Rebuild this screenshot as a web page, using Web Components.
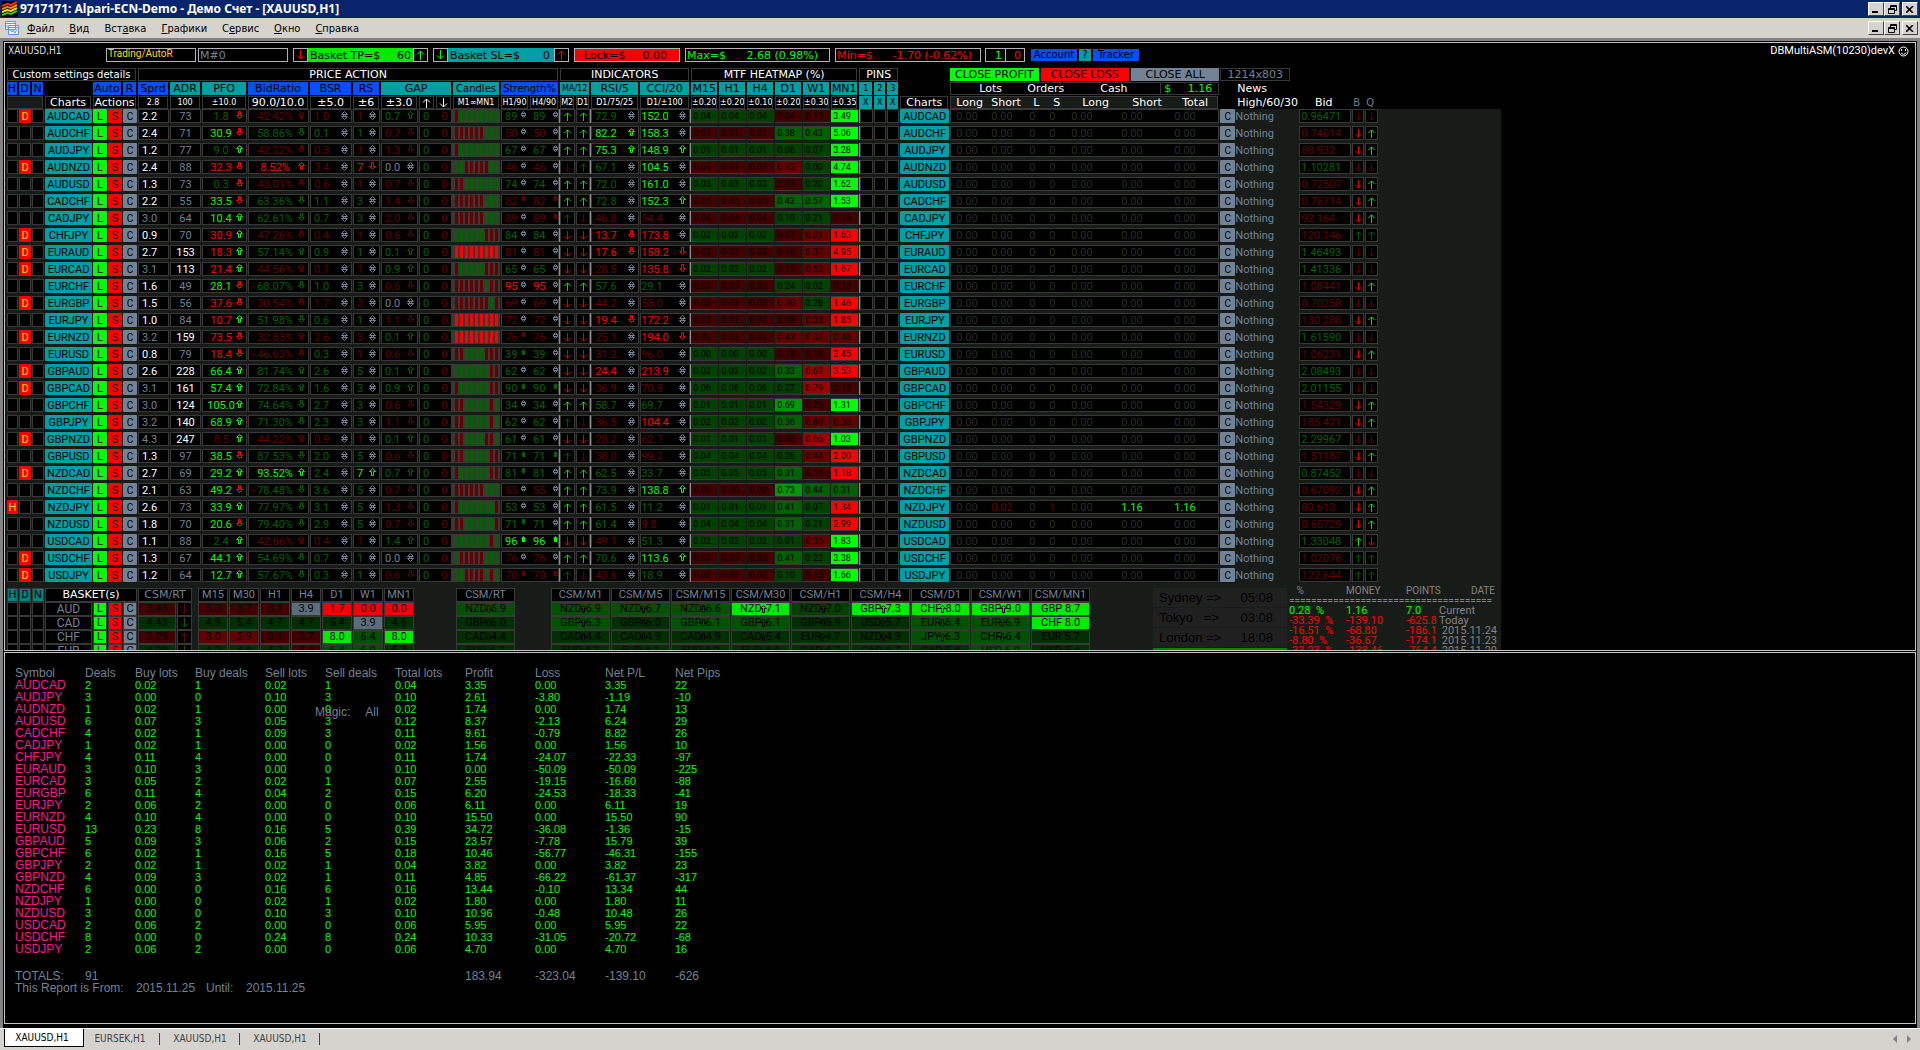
<!DOCTYPE html>
<html lang="ru">
<head>
<meta charset="utf-8">
<title>9717171: Alpari-ECN-Demo - Демо Счет - [XAUUSD,H1]</title>
<style>
html,body{margin:0;height:100%;background:#000;overflow:hidden}
body{font-family:Roboto,"Liberation Sans",sans-serif;font-size:11px;
--lime:#00ff00;--red:#ff0000;--dg:#006300;--dr:#630000;--slate:#738294;--teal:#009ea5;--blue:#0051f7;--line:#393839;--panel:#181c18;--face:#d6d3ce;
--wide:"DejaVu Sans",sans-serif;--ui:"DejaVu Sans Condensed","DejaVu Sans",sans-serif}
</style>
</head>
<body>
<trading-terminal></trading-terminal>
<script>
const RESET = `*{box-sizing:border-box}button,input{font:inherit;color:inherit;border:0;border-radius:0;padding:0;margin:0;background:none;min-width:0}svg{display:block;flex:none}`;
const COLORS = {G:'var(--lime)',R:'var(--red)',g:'var(--dg)',r:'var(--dr)',w:'#fff',s:'var(--slate)',k:'#000'};
const SHAPES = {
  hu:[7,8,'M3.5 .5L6.5 3.5H4.5V7.5H2.5V3.5H.5Z'],
  hd:[7,8,'M3.5 7.5L6.5 4.5H4.5V.5H2.5V4.5H.5Z'],
  n:[7,9,'M3.5 .5L6.5 3.5H.5ZM3.5 8.5L.5 5.5H6.5ZM2.5 3.5V5.5M4.5 3.5V5.5'],
  m:[5,7,'M2.5 .5L4.5 2.5V4.5L2.5 6.5L.5 4.5V2.5ZM1 2.5H4M1 4.5H4'],
  su:[5,7,'M2.5 0L5 3H4V6H1V3H0Z',1],
  sd:[5,7,'M2.5 6L5 3H4V0H1V3H0Z',1],
  u:[9,10,'M4.5 1V10M1 4.5L4.5 1L8 4.5'],
  d:[9,10,'M4.5 0V9M1 5.5L4.5 9L8 5.5']
};
function icon(name, color) {
  const s = SHAPES[name], c = COLORS[color];
  const paint = s[3] ? `fill="${c}"` : `fill="none" stroke="${c}"`;
  return `<svg width="${s[0]}" height="${s[1]}" viewBox="0 0 ${s[0]} ${s[1]}" ${paint} aria-hidden="true"><path d="${s[2]}"/></svg>`;
}
function define(name, render) {
  customElements.define(name, class extends HTMLElement {
    constructor() {
      super();
      const t = document.createElement('template');
      t.innerHTML = `<style>${RESET}</style>` + render();
      this.attachShadow({mode:'open'}).append(t.content.cloneNode(true));
    }
  });
}

define('title-bar', () => `<style>
:host{display:flex;align-items:center;height:18px;flex:none;background:#08246b;color:#fff;padding:0 2px;gap:2px;font:bold 12px "Noto Sans",sans-serif}
h1{flex:1;margin:0;font:inherit;line-height:18px;white-space:pre}
</style>
<svg width="16" height="16" viewBox="0 0 16 16" fill="none" stroke-width="2"><rect width="16" height="16" fill="#000"/><path stroke="#f73000" d="M0 5L5 3L9 4L15 1"/><path stroke="#ff8a00" d="M0 8L5 6L9 7L15 4"/><path stroke="#ffdb00" d="M0 11L5 9L9 10L15 7"/><path stroke="#42c300" d="M0 14L5 12L9 13L15 10"/></svg>
<h1>9717171: Alpari-ECN-Demo - Демо Счет - [XAUUSD,H1]</h1>
<window-buttons></window-buttons>`);

define('window-buttons', () => `<style>
:host{display:flex}
button{width:16px;height:14px;background:var(--face);border:1px solid;border-color:#fff #424142 #424142 #fff;display:flex;align-items:center;justify-content:center}
button:last-child{margin-left:2px}
</style>
<button aria-label="Minimize"><svg width="8" height="8" fill="none" stroke="#000" stroke-width="2"><path d="M0 7H6"/></svg></button>
<button aria-label="Restore"><svg width="9" height="9" fill="none" stroke="#000"><path d="M2.5 3V.5H8.5V5.5H6.5M2 1.5H9M.5 3.5H6.5V8.5H.5ZM0 4.5H7"/></svg></button>
<button aria-label="Close"><svg width="8" height="7" fill="none" stroke="#000" stroke-width="1.6"><path d="M0 0L7 7M7 0L0 7"/></svg></button>`);

define('menu-bar', () => `<style>
:host{display:flex;align-items:center;height:20px;flex:none;background:var(--face);color:#000;font:11px var(--ui);padding:0 2px 0 4px}
nav{display:flex;gap:15px;flex:1;margin-left:7px}
</style>
<svg width="16" height="16" viewBox="0 0 16 16" fill="#fff" stroke="#4a9af7"><path d="M1.5 1.5H11.5V9.5H1.5ZM4.5 5.5H14.5V14.5H4.5Z"/><path fill="none" d="M1 3.5H12M5 7.5H14M6 10L8 12L9 10L11 13L13 9M3 5V8"/></svg>
<nav><button><u>Ф</u>айл</button><button><u>В</u>ид</button><button>Вст<u>а</u>вка</button><button><u>Г</u>рафики</button><button>С<u>е</u>рвис</button><button><u>О</u>кно</button><button><u>С</u>правка</button></nav>
<window-buttons></window-buttons>`);

define('control-strip', () => `<style>
:host{display:flex;align-items:center;height:24px;padding:0 6px 0 3px;font:11px var(--wide);color:#000}
.name{width:98px;font:10px var(--ui);color:#dedbde;align-self:flex-start;margin-top:2px}
.f{height:14px;line-height:11px;border:1px solid #b5b2b5;display:flex;align-items:center;white-space:pre;overflow:hidden;padding:0 1px;text-align:left;flex:none}
.a{width:15px;justify-content:center;padding:0}
.f b{font-weight:400;margin-left:auto}
.blue,.q{height:12px;background:var(--blue);padding:0 2px;font-size:10px;line-height:12px;margin-right:2px;width:46px}
.q{background:var(--teal);width:12px}
.ver{margin:2px 0 0 auto;align-self:flex-start;font:11px/12px Roboto,sans-serif;color:#fff;display:flex;align-items:center;gap:3px}
</style>
<span class="name">XAUUSD,H1</span>
<button class="f" style="width:90px;color:#ffdb00;font:10px/10px Roboto;align-items:flex-start">Trading/AutoR</button>
<input class="f" aria-label="Magic number" value="M#0" style="width:90px;color:var(--slate);margin:0 5px 0 2px">
<button class="f a">${icon('d','R')}</button>
<span class="f" style="width:105px;background:#00eb00;border-color:#00eb00">Basket TP=$<b>60</b></span>
<button class="f a">${icon('u','G')}</button>
<button class="f a" style="margin-left:5px">${icon('d','G')}</button>
<span class="f" style="width:106px;background:var(--teal);border-color:var(--teal)">Basket SL=$<b style="margin-right:2px">0</b></span>
<button class="f a">${icon('u','R')}</button>
<button class="f" style="width:106px;background:#f70000;margin:0 5px;padding:0 12px 0 9px">Lock=$<b>0.00</b></button>
<span class="f" style="width:145px;color:var(--lime)">Max=$<b style="margin-right:10px">2.68 (0.98%)</b></span>
<span class="f" style="width:146px;color:var(--red);margin:0 4px 0 5px">Min=$<b style="margin-right:7px">-1.70 (-0.62%)</b></span>
<span class="f" style="width:20px;color:var(--lime);padding-right:3px;border-right:0"><b>1</b></span>
<span class="f" style="width:20px;color:var(--red);padding-right:3px;margin-right:6px"><b>0</b></span>
<button class="blue">Account</button><button class="q">?</button><button class="blue">Tracker</button>
<span class="ver">DBMultiASM(10230)devX<svg width="11" height="11" viewBox="0 0 11 11" fill="none" stroke="#fff"><circle cx="5.5" cy="5.5" r="4.5"/><path d="M3.5 3V5M7.5 3V5M3 7L5.5 8.5L8 7"/></svg></span>`);

const ROWS = `AUDCAD|D|2.2|73|1.8g d|42.42r u|1.0r|1r|0.7g u|rgggggggg|89g nn|UU|72.9g n|152.0G n|+.04 -.04 -.15 +3.49|0.96471g dd
AUDCHF||2.4|71|30.9G d|58.86g d|0.1g|1g|0.7r d|rrrrrrggg|50r nn|UU|82.2G u|158.3G n|-.01 +.38 +.43 +5.06|0.74014r DU
AUDJPY||1.2|77|9.0g u|42.22r d|0.3r|1r|1.3r d|rgggggggg|67g nn|UU|75.3G u|148.9G u|+.01 +.06 +.07 +3.28|88.932r DU
AUDNZD|D|2.4|88|32.3R d|8.52R u|3.4r|7R d|0.0s n|ggrrrrrgg|46r nn|du|67.1g n|104.5G n|-.01 -.32 +.00 +4.74|1.10281g dd
AUDUSD||1.3|73|0.3g d|43.01r d|0.6r|1r|0.7r d|rrggggggg|74g nn|UU|72.0g n|161.0G n|+.03 -.03 +.20 +1.62|0.72507r DU
CADCHF||2.2|55|33.5G d|63.36g d|1.1g|3g|1.4r d|rrrrrrggg|82r dd|UU|72.8g n|152.3G u|-.05 +.43 +.57 +1.53|0.76714r DU
CADJPY||3.0|64|10.4G u|62.61g d|0.7g|3g|2.0r d|rrrrrrggg|89r nu|ud|46.8r n|54.4r n|-.04 +.10 +.21 -.16|92.164r DU
CHFJPY|D|0.9|70|30.9R u|47.26r d|0.4r|1r|0.6r d|ggggggrrr|84g nn|DD|13.7R d|173.8R n|+.02 -.27 -.31 -1.63|120.146r uu
EURAUD|D|2.7|153|18.3R u|57.14g u|0.9g|1g|0.1g u|RRRRRRRRR|81r nn|DD|17.6R d|158.2R d|-.02 -.10 -.37 -4.95|1.46493g dd
EURCAD|D|3.1|113|21.4R u|44.56r u|0.1r|1r|0.9g u|rgggggrrr|65g nn|DD|28.5r n|135.8R d|+.02 -.17 -.52 -1.67|1.41336g dd
EURCHF||1.6|49|28.1G d|68.07g d|1.0g|3g|0.6r d|rrrrrrgrr|95R nn|UU|57.6g n|29.1g n|-.03 +.24 +.02 -.18|1.08441r DU
EURGBP|D|1.5|56|37.6R d|30.54r d|1.7r|3r|0.0s n|rrrrrrrgr|69r nn|DD|44.2r n|58.0r n|-.03 -.38 +.28 -1.46|0.70258r dd
EURJPY||1.0|84|10.7R u|51.98g d|0.6g|1g|1.1r d|RRRRRRRRR|72r nn|DD|19.4R d|172.2R n|-.02 -.08 -.33 -1.85|130.288r DU
EURNZD|D|3.2|159|73.5R d|32.83r u|2.6r|3r|0.1g u|RRRRRRRRR|76r dn|DD|25.1r n|194.0R d|-.03 -.43 -.37 -.46|1.61590g dd
EURUSD||0.8|79|18.4R d|46.63r d|0.3g|1r|0.6r d|rrggggrrr|39g un|DD|31.2r n|96.0r n|+.00 -.18 -.18 -3.45|1.06231r DU
GBPAUD|D|2.6|228|66.4G u|81.74g u|2.6g|5g|0.1g u|gggggggrr|62g nn|DD|24.4R n|213.9R n|+.02 +.33 -.62 -3.53|2.08493g dd
GBPCAD|D|3.1|161|57.4G u|72.84g u|1.6g|3g|0.9g u|rggggggrr|90g uu|DD|36.9r n|70.9r n|+.06 +.27 -.79 -.19|2.01155g dd
GBPCHF||3.0|124|105.0G u|74.64g d|2.7g|3g|0.6r d|rrgggggrg|34g nn|UU|58.7g n|69.7g n|+.01 +.69 -.22 +1.31|1.54329r DU
GBPJPY||3.2|140|68.9G u|71.30g d|2.3g|3g|1.1r d|rrgggggrg|62g nn|ud|36.5r n|104.4R n|+.02 +.36 -.60 -.38|185.421r DU
GBPNZD|D|4.3|247|8.5r u|44.22r u|0.9r|1r|0.1g u|rrggggrrg|61g nn|DD|28.2r n|62.7r n|+.01 -.02 -.66 +1.03|2.29967g dd
GBPUSD||1.3|97|38.5G d|87.53g d|2.0g|5g|0.6r d|rrgggggrr|71g uu|ud|38.0r n|99.2r n|+.04 +.26 -.44 -2.00|1.51187r DU
NZDCAD|D|2.7|69|29.2G u|93.52G u|2.4g|7G u|0.7g u|rggggggrr|81g dn|UU|62.5g n|33.7g n|+.05 +.31 -.15 -1.18|0.87452g dd
NZDCHF||2.1|63|49.2G d|78.48g d|3.6g|5g|0.7r d|rrrrrrggg|55r nn|UU|73.9g n|138.8G u|-.00 +.73 +.44 +.31|0.67092r DU
NZDJPY|H|2.6|73|33.9G u|77.97g d|3.1g|5g|1.3r d|rgggggggr|53g nn|UU|61.5g n|11.2g n|+.01 +.41 +.07 -1.34|80.613r DU
NZDUSD||1.8|70|20.6G d|79.40g d|2.9g|5g|0.7r d|rrggggggr|71g dn|UU|61.4g n|9.8r n|+.04 +.31 +.21 -2.99|0.65729r DU
USDCAD||1.1|88|2.4g u|42.66r u|0.4r|1r|1.4g u|gggggggrg|96G uu|DD|49.1r n|51.3g n|+.02 +.01 -.35 +1.83|1.33048g UD
USDCHF|D|1.3|67|44.1G u|54.69g d|0.7g|1g|0.0s n|grrrrrggg|76r nn|UU|70.6g n|113.6G u|-.03 +.41 +.22 +3.38|1.02076r uu
USDJPY|D|1.2|64|12.7G u|57.67g d|0.3g|1g|0.6r d|ggrrrrgrg|70r uu|ud|43.6r n|18.9g n|-.02 +.10 -.15 +1.66|122.644r uu`;
const COLS = [12,13,13,48,15,15,15,32,32,46,62,43,28,38,17,17,48,29,30,16,15,49,51,28,28,28,28,28,28,15,13,13,50,37,38,20,22,50,53,50,16,63,53,13,14,122];

const split = f => { const [a,i] = f.split(' '); return [a.slice(0,-1), a.slice(-1), i]; };
const box = (html, cls='', color='') => `<td class="${cls}"><div class="b"${color?` style="color:${COLORS[color]}"`:''}>${html}</div></td>`;
function reading(field, opt={}) {
  const [v,c,i='n'] = split(field);
  const ic = i==='n' ? icon('n','s') : icon('h'+i, opt.solid ? (i==='u'?'G':'R') : c);
  return box(`<span>${v}${opt.pct?'%':''}</span>${ic}`, 'v '+(opt.cls||''), c);
}
function thin(ch) { const l = ch.toLowerCase(); return icon(l, l==='u' ? (ch==='U'?'G':'g') : (ch==='D'?'R':'r')); }
function heat(s, cls) {
  const v = Math.abs(+s), up = s[0]==='+', lvl = v>=1?3:v>.6?2:v>=.3?1:0;
  const bg = (up?['#004100','#006100','#009a00','#00ff00']:['#420000','#630000','#9c0000','#ff0000'])[lvl];
  return `<td class="${cls}"><div class="b h" style="background:${bg}">${v.toFixed(2)}</div></td>`;
}
function row(line) {
  const f = line.split('|'), sym = f[0];
  const flag = k => f[1]===k ? `<div class="b flag">${k}</div>` : `<div class="b"></div>`;
  const [sv,sc,si] = split(f[10]);
  const str = k => box(`<span>${sv}</span>${icon({n:'m',u:'su',d:'sd'}[si[k]], si[k]==='n'?'s':sc)}`, k?'st2':'st1', sc);
  const ht = f[14].split(' '), hs = [ht[0],ht[0],...ht];
  const [bv,bc,ba] = split(f[15]);
  const jp = sym==='NZDJPY';
  const led = jp ? [['0.00'],['0.02','r'],['0'],['1','r'],['0.00'],['1.16','G'],['1.16','G']] : ['0.00','0.00','0','0','0.00','0.00','0.00'].map(x=>[x]);
  return `<tr><td>${flag('H')}</td><td>${flag('D')}</td><td>${flag('N')}</td>
<td><button class="sym">${sym}</button></td><td><button class="L">L</button></td><td><button class="S">S</button></td><td><button class="C">C</button></td>
${box(f[2],'p3',+f[2]<3?'w':'s')}${box(f[3],'c',+f[3]>=100?'w':'s')}${reading(f[4],{solid:1,cls:'c2'})}${reading(f[5],{pct:1,cls:'c2'})}${reading(f[6])}${reading(f[7])}${reading(f[8])}
<td colspan="2"><div class="b pair"><span style="color:var(--dg)">0</span><span style="color:var(--dr)">0</span></div></td>
<td><div class="candles">${[...f[9]].map(c=>`<i style="background:${COLORS[c]}"></i>`).join('')}</div></td>
${str(0)}${str(1)}${box(thin(f[11][0]),'c sep')}${box(thin(f[11][1]),'c')}${reading(f[12],{cls:'sep'})}${reading(f[13],{cls:'cci'})}
${hs.map((h,i)=>heat(h,i?'':'sep')).join('')}${box('','sep pin')}${box('')}${box('')}
<td><button class="sym">${sym}</button></td>
${led.map(([t,c],i)=>`<td><div class="b led${i===0?' first':i===6?' last':''}"${c?` style="color:${COLORS[c]}"`:''}>${t}</div></td>`).join('')}
<td><button class="C">C</button></td><td class="news">Nothing</td>${box(bv,'bid',bc)}${box(thin(ba[0]),'c')}${box(thin(ba[1]),'c')}<td></td></tr>`;
}
const hd = (t,n=1,cls='') => `<th colspan="${n}" class="${cls}"><div>${t}</div></th>`;
define('market-grid', () => `<style>
:host{display:block;color:#fff;padding-left:1px}
table{table-layout:fixed;width:${COLS.reduce((a,b)=>a+b)}px;border-collapse:collapse;border-spacing:0}
td,th{padding:0;text-align:left;font-weight:400;white-space:nowrap}
th{height:14px;font:11px/12px var(--wide)}
th>div{display:flex;align-items:center;justify-content:center;height:13px;margin:1px 1px 0;border:1px solid var(--line);white-space:pre;overflow:hidden;width:auto}
th.o>div{border-color:transparent;justify-content:flex-start;overflow:visible}
th.t>div,th.bl>div{background:var(--teal);border-color:var(--teal);color:#000}
th.bl>div{background:var(--blue);border-color:var(--blue)}
th.s>div{font-size:8px}
th.m>div{background:var(--panel)}
th.x>div,th.cn>div{font-size:10px}
th.ma>div{font-size:8px}
th.dim>div{color:var(--slate);font-size:10px}
th>.lh{justify-content:flex-start;padding-left:5px}
th>.close{border:0;gap:2px;margin-right:0}
.close button{flex:1;height:13px;color:#000;text-align:center;line-height:13px}
th>.cash{justify-content:flex-start;padding-left:28px;margin-right:0}
.cash span{flex:none}
.total{margin-left:auto;width:58px;height:13px;border-left:1px solid var(--line);display:flex;align-items:center;justify-content:space-between;padding:0 6px 0 3px;color:var(--lime)}
tbody tr{height:17px}
tbody td{vertical-align:top;height:17px}
.b{height:14px;margin-left:1px;border:1px solid var(--line);background:#000;line-height:13px;overflow:hidden;display:flex;align-items:center}
.b>span{padding-top:1px}
.c>.b,.p3>.b,.bid>.b,.flag,.led,.h{padding-top:1px}
.flag{background:#f70000;border-color:#f70000;color:#ffdb00;justify-content:center}
.sym,.L,.S,.C{display:block;width:calc(100% - 1px);margin-left:1px;height:14px;line-height:15px;color:#000;text-align:center;overflow:hidden;border-radius:1px}
.sym{background:var(--teal)}.L{background:var(--lime)}.S{background:var(--red)}.C{background:var(--slate);font-size:10px}
.c .b{justify-content:center}
.c svg{height:9px}
.p3 .b{padding-left:3px}
.v .b{justify-content:space-between;padding:0 3px 0 3px}
.v .b svg{margin-top:-2px}
.cci .b{padding-left:0}
.c2 .b span{flex:1;text-align:center}
.pair{padding:0 3px;gap:12px}
.candles{height:14px;background:var(--line);display:flex;gap:2px;padding:1px 0 1px 3px}
.candles i{width:3px}
.st1 .b,.st2 .b{justify-content:space-between;padding:0 3px}
.st1 .b{border-right:0;margin-right:0}
.st2 .b{border-left:0;margin-left:0;padding-right:0;padding-left:4px}
.st1 svg,.st2 svg{margin-top:-3px}
.sep .b{box-shadow:-1px 0 #8c8a8c}
.pin .b{margin-left:2px}
.h{color:#000;font-size:9px;border:1px solid var(--line);border-width:1px 0;padding-left:2px}
.led{margin:0;border-width:1px 0;color:#292c29;padding-left:5px}
.first{border-left-width:1px;margin-left:1px}.last{border-right-width:1px}
.news{color:var(--slate);line-height:15px;font-size:11px}
.bid .b{padding-left:1px}
</style>
<table aria-label="Market overview"><colgroup>${COLS.map(w=>`<col style="width:${w}px">`).join('')}</colgroup>
<thead>
<tr>${hd('Custom settings details',7,'x')}${hd('PRICE ACTION',12)}${hd('INDICATORS',4)}${hd('MTF HEATMAP (%)',6)}${hd('PINS',3)}<th></th>
<th colspan="7"><div class="close"><button style="background:var(--lime)">CLOSE PROFIT</button><button style="background:var(--red)">CLOSE LOSS</button><button style="background:var(--slate)">CLOSE ALL</button></div></th>
<th colspan="2"><div style="color:var(--slate);margin-right:8px">1214x803</div></th><th colspan="4"></th></tr>
<tr>${hd('H',1,'bl')}${hd('D',1,'bl')}${hd('N',1,'bl')}<th></th>${hd('Auto',2,'bl')}${hd('R',1,'bl')}${hd('Sprd',1,'bl')}${hd('ADR',1,'t')}${hd('PFO',1,'t')}${hd('BidRatio',1,'bl')}${hd('BSR',1,'bl')}${hd('RS',1,'bl')}${hd('GAP',3,'t')}${hd('Candles',1,'t cn')}${hd('Strength%',2,'bl cn')}${hd('MA/12',2,'t ma')}${hd('RSI/5',1,'t')}${hd('CCI/20',1,'t')}${['M15','H1','H4','D1','W1','MN1'].map(x=>hd(x,1,'t')).join('')}${hd('1',1,'t s')}${hd('2',1,'t s')}${hd('3',1,'t s')}<th></th>
<th colspan="7"><div class="cash"><span style="width:48px">Lots</span><span style="width:73px">Orders</span><span>Cash</span><span class="total"><span>$</span><span>1.16</span></span></div></th>
<th></th>${hd('News',5,'o')}</tr>
<tr>${hd('',3,'m')}${hd('Charts')}${hd('Actions',3)}${hd('2.8',1,'s')}${hd('100',1,'s')}${hd('±10.0',1,'s')}${hd('90.0/10.0')}${hd('±5.0')}${hd('±6')}${hd('±3.0')}${hd(icon('u','w'))}${hd(icon('d','w'))}${hd('M1∞MN1',1,'s')}${hd('H1/90',1,'s')}${hd('H4/90',1,'s')}${hd('M2',1,'s')}${hd('D1',1,'s')}${hd('D1/75/25',1,'s')}${hd('D1/±100',1,'s')}${['±0.20','±0.20','±0.10','±0.20','±0.30','±0.35'].map(x=>hd(x,1,'s')).join('')}${hd('X',1,'t s')}${hd('X',1,'t s')}${hd('X',1,'t s')}${hd('Charts')}
<th colspan="7" class="m"><div class="lh"><span style="width:35px">Long</span><span style="width:42px">Short</span><span style="width:20px">L</span><span style="width:29px">S</span><span style="width:50px">Long</span><span style="width:50px">Short</span><span>Total</span></div></th>
<th></th><th colspan="2" class="o"><div style="gap:17px"><span>High/60/30</span><span>Bid</span></div></th>${hd('B',1,'o dim')}${hd('Q',1,'o dim')}<th></th></tr>
</thead>
<tbody>${ROWS.split('\n').map(row).join('')}</tbody></table>`);

const SHADE = {a:'#420000',b:'#630000',R:'#f70000',g:'#003000',h:'#005100',G:'#00eb00',s:'#5a6d7b',m:'#004100'};
const BASKETS = [
 ['AUD','3.43','ad','3.3a 3.7a 3.1a 3.9s 1.7R 0.0R 0.0R','NZDhd6.9h NZDhu6.9h NZDhu6.7h NZDhd6.6h NZDhu7.1G NZDhu7.0m GBPhu7.3G CHFhu8.0G GBPhu9.0G GBP--8.7G'],
 ['CAD','4.43','gd','4.9g 5.4g 4.7g 4.7g 5.4g 3.9s 4.6g','GBPhd6.0g GBPhu6.3h GBPhd6.0g GBPhd6.1h GBPhu6.1h GBPhd5.9g USDhu5.7g EURhd6.4h EURhu6.9h CHF--8.0G'],
 ['CHF','3.29','au','3.0b 2.9b 3.1a 3.7a 8.0G 6.4h 8.0G','CADhd4.4g CADhd4.4g CADhd4.9g CADhd4.9g CADhu5.4g EURhu4.7g NZDhu4.9g JPYhu6.3h CHFhd6.4h EUR--5.7g'],
 ['EUR','4.29','gd','4.2g 4.4g 4.7g 3.4a 6.4h 6.0h 5.7g','EUR--4.2g EUR--4.3g EUR--4.1g EUR--4.2g EUR--4.4g CAD--4.7g CAD--4.7g CAD--5.4g USD--6.0h USD--5.4g']];
const BC = [12,13,13,48,15,15,15,39,16,5,31,31,31,31,31,31,31,41,60,35,60,60,60,60,60,60,60,60,60];
define('basket-grid', () => `<style>
:host{display:block;flex:none;padding-left:1px;color:var(--slate);line-height:12px}
table{table-layout:fixed;width:${BC.reduce((a,b)=>a+b)}px;border-collapse:collapse}
th,td{height:14px;padding:0;font-weight:400;text-align:center}
.b,button{display:flex;align-items:center;justify-content:center;margin-left:1px;height:14px;border:1px solid var(--line);background:#000;white-space:pre;width:calc(100% - 1px)}
.k,button{color:#000}
th .b{font-size:11px}
.t{background:#008284;color:#000}
.pair svg{margin:0 -1px 0 -2px}
</style>
<table aria-label="Currency baskets"><colgroup>${BC.map(w=>`<col style="width:${w}px">`).join('')}</colgroup>
<thead><tr>${['H','D','N'].map(x=>`<th><div class="b t">${x}</div></th>`).join('')}<th colspan="4"><div class="b" style="color:#fff;font-family:var(--wide)">BASKET(s)</div></th><th colspan="2"><div class="b" style="font-family:var(--wide)">CSM/RT</div></th><th></th>
${['M15','M30','H1','H4','D1','W1','MN1'].map(x=>`<th><div class="b">${x}</div></th>`).join('')}<th></th><th><div class="b">CSM/RT</div></th><th></th>
${['M1','M5','M15','M30','H1','H4','D1','W1','MN1'].map(x=>`<th><div class="b">CSM/${x}</div></th>`).join('')}</tr></thead>
<tbody>${BASKETS.map(([n,v,s,tf,csm])=>{
 const k=(t,c)=>`<td><div class="b k" style="background:${SHADE[c]}">${t}</div></td>`;
 const pairs=csm.split(' ').map(p=>{const a=p.slice(3,5);return `<td><div class="b k pair" style="background:${SHADE[p.slice(8)]}">${p.slice(0,3)}${a==='--'?' ':icon(a,'k')}${p.slice(5,8)}</div></td>`});
 return `<tr>${'<td><div class="b"></div></td>'.repeat(3)}<td><div class="b" style="font-size:12px">${n}</div></td><td><button style="background:var(--lime)">L</button></td><td><button style="background:var(--red)">S</button></td><td><button style="background:var(--slate)">C</button></td>
 ${k(v,s[0])}<td><div class="b">${icon(s[1],s[0]==='a'?'r':'g')}</div></td><td></td>${tf.split(' ').map(x=>k(x.slice(0,-1),x.slice(-1))).join('')}<td></td>${pairs[0]}<td></td>${pairs.slice(1).join('')}</tr>`}).join('')}</tbody></table>`);

define('session-clock', () => `<style>
:host{display:block;width:134px;flex:none;color:#000;font:13px/19px "Liberation Sans",sans-serif}
p{margin:0 0 1px;background:#212021;height:19px;display:flex;justify-content:space-between;padding:0 14px 0 6px;white-space:pre}
i{display:block;height:4px;background:#008200}
</style><p><span>Sydney =></span><span>05:08</span></p><p><span>Tokyo   =></span><span>03:08</span></p><p><span>London =></span><span>18:08</span></p><i></i>`);

define('account-stats', () => `<style>
:host{display:block;width:213px;flex:none;color:#848284;font:10px/10px Roboto,sans-serif}
table{table-layout:fixed;width:213px;border-collapse:collapse}
th,td{padding:0;text-align:left;font-weight:400;white-space:pre;color:var(--red)}
td:last-child,th,.line{color:#848284}
tr.up td:not(:last-child){color:var(--lime)}
td{font-size:11px}
.line{height:10px;overflow:hidden;font-size:10px}
</style><table aria-label="Account history"><colgroup><col style="width:57px"><col style="width:60px"><col style="width:33px"><col></colgroup>
<thead><tr><th>   %</th><th>MONEY</th><th>POINTS</th><th style="text-align:right;padding-right:7px">DATE</th></tr><tr><td colspan="4"><div class="line">=====================================</div></td></tr></thead>
<tbody><tr class="up"><td>0.28  %</td><td>1.16</td><td>7.0</td><td>Current</td></tr><tr><td>-33.39  %</td><td>-139.10</td><td>-625.8</td><td>Today</td></tr><tr><td>-16.51  %</td><td>-68.80</td><td>-186.1</td><td> 2015.11.24</td></tr><tr><td>-8.80  %</td><td>-36.67</td><td>-174.1</td><td> 2015.11.23</td></tr><tr><td>-33.23  %</td><td>-138.46</td><td>-764.4</td><td> 2015.11.20</td></tr></tbody></table>`);

const DEALS = `AUDCAD 2 0.02 1 0.02 1 0.04 3.35 0.00 3.35 22
AUDJPY 3 0.00 0 0.10 3 0.10 2.61 -3.80 -1.19 -10
AUDNZD 1 0.02 1 0.00 0 0.02 1.74 0.00 1.74 13
AUDUSD 6 0.07 3 0.05 3 0.12 8.37 -2.13 6.24 29
CADCHF 4 0.02 1 0.09 3 0.11 9.61 -0.79 8.82 26
CADJPY 1 0.02 1 0.00 0 0.02 1.56 0.00 1.56 10
CHFJPY 4 0.11 4 0.00 0 0.11 1.74 -24.07 -22.33 -97
EURAUD 3 0.10 3 0.00 0 0.10 0.00 -50.09 -50.09 -225
EURCAD 3 0.05 2 0.02 1 0.07 2.55 -19.15 -16.60 -88
EURGBP 6 0.11 4 0.04 2 0.15 6.20 -24.53 -18.33 -41
EURJPY 2 0.06 2 0.00 0 0.06 6.11 0.00 6.11 19
EURNZD 4 0.10 4 0.00 0 0.10 15.50 0.00 15.50 90
EURUSD 13 0.23 8 0.16 5 0.39 34.72 -36.08 -1.36 -15
GBPAUD 5 0.09 3 0.06 2 0.15 23.57 -7.78 15.79 39
GBPCHF 6 0.02 1 0.16 5 0.18 10.46 -56.77 -46.31 -155
GBPJPY 2 0.02 1 0.02 1 0.04 3.82 0.00 3.82 23
GBPNZD 4 0.09 3 0.02 1 0.11 4.85 -66.22 -61.37 -317
NZDCHF 6 0.00 0 0.16 6 0.16 13.44 -0.10 13.34 44
NZDJPY 1 0.00 0 0.02 1 0.02 1.80 0.00 1.80 11
NZDUSD 3 0.00 0 0.10 3 0.10 10.96 -0.48 10.48 26
USDCAD 2 0.06 2 0.00 0 0.06 5.95 0.00 5.95 22
USDCHF 8 0.00 0 0.24 8 0.24 10.33 -31.05 -20.72 -68
USDJPY 2 0.06 2 0.00 0 0.06 4.70 0.00 4.70 16`;
define('deals-report', () => `<style>
:host{display:block;position:relative;padding:13px 0 0 10px;color:var(--slate);font:12px/12px "Liberation Sans",sans-serif}
table{table-layout:fixed;width:730px;border-collapse:collapse}
th,td{padding:0;height:12px;line-height:12px;text-align:left;font-weight:400;white-space:pre}
th{height:13px}
tbody td{color:var(--lime);font-size:11px}
tbody td:first-child{color:#ff1494;font-size:12px}
tfoot td{height:27px;vertical-align:bottom}
p{margin:0;display:grid;grid-template-columns:121px 70px 40px auto;justify-content:start;white-space:pre}
.magic{position:absolute;left:310px;top:53px;display:flex;gap:15px}
</style><table aria-label="Deals"><colgroup>${[70,50,60,70,60,70,70,70,70,70,70].map(w=>`<col style="width:${w}px">`).join('')}</colgroup>
<thead><tr>${['Symbol','Deals','Buy lots','Buy deals','Sell lots','Sell deals','Total lots','Profit','Loss','Net P/L','Net Pips'].map(x=>`<th>${x}</th>`).join('')}</tr></thead>
<tbody>${DEALS.split('\n').map(r=>`<tr>${r.split(' ').map(x=>`<td>${x}</td>`).join('')}</tr>`).join('')}</tbody>
<tfoot><tr><td>TOTALS:</td><td>91</td><td></td><td></td><td></td><td></td><td></td><td>183.94</td><td>-323.04</td><td>-139.10</td><td>-626</td></tr></tfoot></table>
<p><span>This Report is From:</span><span>2015.11.25</span><span>Until:</span><span>2015.11.25</span></p>
<div class="magic"><span>Magic:</span><span>All</span></div>`);

define('chart-tabs', () => `<style>
:host{display:flex;height:22px;flex:none;background:var(--face);border-top:1px solid #fff;font:10px var(--ui);color:#424142;padding:0 8px 0 4px;align-items:flex-start}
button{width:80px;height:18px;position:relative;padding-right:8px}
button:not(.on)::after{content:"";position:absolute;right:4px;top:4px;height:12px;border-right:1px solid #424142}
.on{background:#fff;color:#000;border:1px solid #000;border-top:0;padding-right:4px}
span{margin-left:auto;display:flex;gap:9px;padding-top:6px}
</style><button class="on">XAUUSD,H1</button><button>EURSEK,H1</button><button>XAUUSD,H1</button><button>XAUUSD,H1</button>
<span><svg width="5" height="8" fill="#848284"><path d="M4 0V8L0 4Z"/></svg><svg width="5" height="8" fill="#848284"><path d="M0 0V8L4 4Z"/></svg></span>`);

define('chart-window', () => `<style>:host{display:block;overflow:hidden;background:#000;border:1px solid #c6c7c6}</style><slot></slot>`);

define('trading-terminal', () => `<style>
:host{display:flex;flex-direction:column;height:100vh}
main{flex:1;min-height:0;display:flex;flex-direction:column;background:#000;border:solid #848284;border-width:3px 3px 0 3px;padding:1px 1px 4px;gap:1px}
.top{height:609px;flex:none}
.low{flex:1;min-height:0}
.foot{display:flex;align-items:flex-start;padding-top:3px;height:80px}
.foot session-clock{margin-left:63px}
.foot account-stats{margin:-2px 0 0 2px}
.panel{width:1496px;background:linear-gradient(var(--panel),var(--panel)) 0 42px no-repeat}
</style>
<title-bar></title-bar><menu-bar></menu-bar>
<main>
<chart-window class="top"><control-strip></control-strip><div class="panel"><market-grid></market-grid><div class="foot"><basket-grid></basket-grid><session-clock></session-clock><account-stats></account-stats></div></div></chart-window>
<chart-window class="low"><deals-report></deals-report></chart-window>
</main>
<chart-tabs></chart-tabs>`);
</script>
</body>
</html>
